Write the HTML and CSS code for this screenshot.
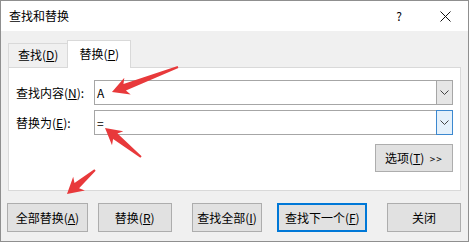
FILE: index.html
```html
<!DOCTYPE html>
<html lang="zh-CN">
<head>
    <meta charset="UTF-8">
    <title>查找和替换</title>
    <link rel="stylesheet" href="styles.css">
</head>
<body>
<div class="page">
    <div class="window">
        <div class="titlebar">
            <span class="title">查找和替换</span>
            <div class="caption-buttons">
                <span class="caption-btn help">?</span>
                <span class="caption-btn">
                    <svg width="11" height="11" viewBox="0 0 11 11">
                        <path d="M0.5 0.5 L10.5 10.5 M10.5 0.5 L0.5 10.5" stroke="#111" stroke-width="1" fill="none"/>
                    </svg>
                </span>
            </div>
        </div>
        <div class="content">
            <div class="tabs">
                <div class="tab">查找(<u>D</u>)</div>
                <div class="tab active">替换(<u>P</u>)</div>
            </div>
            <div class="panel">
                <div class="field-row">
                    <label class="field-label">查找内容(<u>N</u>):</label>
                    <div class="combo">
                        <span class="combo-text">A</span>
                        <span class="drop">
                            <svg width="9" height="5" viewBox="0 0 9 5"><polyline points="0.5,0.5 4.5,4.5 8.5,0.5" fill="none" stroke="#444" stroke-width="1"/></svg>
                        </span>
                    </div>
                </div>
                <div class="field-row">
                    <label class="field-label">替换为(<u>E</u>):</label>
                    <div class="combo">
                        <span class="combo-text">=</span>
                        <span class="drop focus">
                            <svg width="9" height="5" viewBox="0 0 9 5"><polyline points="0.5,0.5 4.5,4.5 8.5,0.5" fill="none" stroke="#444" stroke-width="1"/></svg>
                        </span>
                    </div>
                </div>
                <div class="options-row">
                    <button class="btn options">选项(<u>T</u>)&nbsp;&nbsp;<span class="chev">&gt;&gt;</span></button>
                </div>
            </div>
            <div class="buttons">
                <button class="btn b-all">全部替换(<u>A</u>)</button>
                <button class="btn b-replace">替换(<u>R</u>)</button>
                <button class="btn b-findall">查找全部(<u>I</u>)</button>
                <button class="btn b-next default">查找下一个(<u>F</u>)</button>
                <button class="btn b-close">关闭</button>
            </div>
        </div>
    </div>

    <!-- red annotation arrows drawn over the dialog -->
    <svg class="arrows" width="470" height="243" viewBox="0 0 470 243">
        <g fill="#e8393b">
            <polygon transform="translate(178 67) rotate(159.25)" points="0,-1 57,-3.5 54,-9 70.6,0 54,9 57,3.5 0,1"/>
            <polygon transform="translate(141 157) rotate(-141.14)" points="0,-1 33,-3.5 30,-9 46.2,0 30,9 33,3.5 0,1"/>
            <polygon transform="translate(95 170) rotate(139.4)" points="0,-1 24,-3.5 21,-9 36.9,0 21,9 24,3.5 0,1"/>
        </g>
    </svg>
</div>
</body>
</html>
```

FILE: styles.css
```css
body { margin: 0; font-family: "Noto Sans CJK SC", "Noto Sans", sans-serif; font-size: 12px; color: #000; background: #fff; }
.page { position: relative; width: 470px; height: 243px; }
.window { width: 469px; height: 242px; box-sizing: border-box; border: 1px solid #8f8f8f; background: #f0f0f0; display: flex; flex-direction: column; }

.titlebar { height: 30px; background: #fff; display: flex; align-items: center; padding-left: 8px; }
.title { font-size: 12px; line-height: 14px; }
.caption-buttons { margin-left: auto; display: flex; height: 30px; }
.caption-btn { width: 46px; display: flex; align-items: center; justify-content: center; }
.help { font-size: 12px; line-height: 14px; }

.content { padding: 9px 7px 0 7px; }
.tabs { display: flex; align-items: flex-end; height: 27px; }
.tab { height: 24px; box-sizing: border-box; border: 1px solid #d9d9d9; border-bottom: none; padding: 0 9px; line-height: 22px; background: #f0f0f0; }
.tab.active { height: 28px; margin-bottom: -1px; margin-left: -1px; background: #fff; padding: 0 11px 0 11px; line-height: 26px; position: relative; z-index: 1; }

.panel { height: 124px; box-sizing: border-box; background: #fff; border: 1px solid #d9d9d9; padding: 12px 7px 0 7px; }
.field-row { display: flex; align-items: center; margin-bottom: 5px; }
.field-label { width: 78px; line-height: 14px; }
.combo { display: flex; align-items: stretch; width: 359px; height: 25px; box-sizing: border-box; border: 1px solid #a6a6a6; background: #fff; }
.combo-text { flex: 1; padding-left: 2px; line-height: 23px; }
.drop { width: 17px; box-sizing: border-box; margin: -1px -1px -1px 0; border: 1px solid #a6a6a6; background: #e6e6e6; display: flex; align-items: center; justify-content: center; }
.drop.focus { border-color: #3c88cf; background: #e5f1fb; }

.options-row { display: flex; justify-content: flex-end; margin-top: 9px; }

.btn { font-family: inherit; font-size: 12px; color: #000; background: #e1e1e1; border: 1px solid #adadad; height: 29px; padding: 0; margin: 0; line-height: 14px; }
.btn.options { width: 78px; height: 28px; }
.chev { font-size: 10px; letter-spacing: 1px; }
.btn.default { border: 2px solid #0078d7; }

.buttons { display: flex; margin-top: 12px; margin-left: -1px; }
.b-all { width: 81px; }
.b-replace { width: 74px; margin-left: 10px; }
.b-findall { width: 71px; margin-left: 20px; }
.b-next { width: 90px; margin-left: 15px; }
.b-close { width: 74px; margin-left: 20px; }

.arrows { position: absolute; left: 0; top: 0; pointer-events: none; }
```
